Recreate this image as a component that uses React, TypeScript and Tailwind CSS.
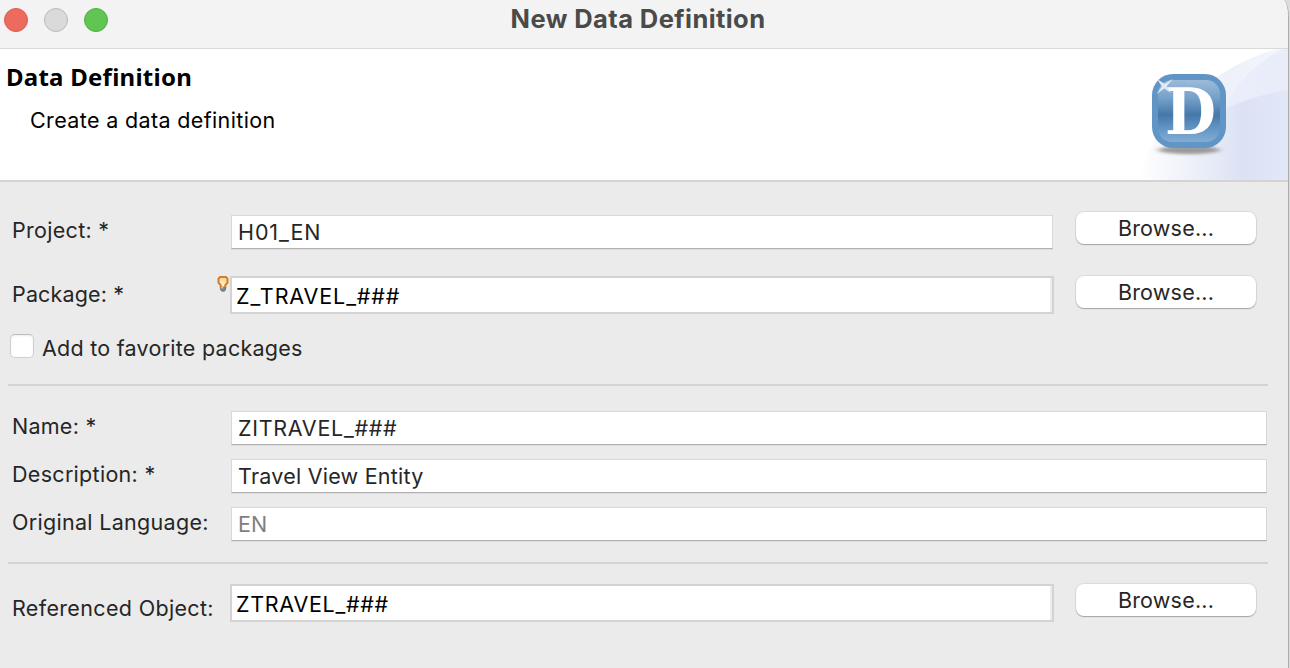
import type { ReactNode } from "react";

function Label({ children, className = "" }: { children: ReactNode; className?: string }) {
  return (
    <span className={`block w-[218px] shrink-0 whitespace-nowrap pl-3 leading-7 ${className}`}>{children}</span>
  );
}

function TextField({ value, className = "" }: { value: string; className?: string }) {
  return (
    <div className="h-[34px] border border-[#d8d8d8] border-b-[#b0b0b0] bg-white pl-[6px] leading-[32px] shadow-[0_1px_0_#dedede]">
      <span className={className}>{value}</span>
    </div>
  );
}

function AssistField({ value, className = "" }: { value: string; className?: string }) {
  return (
    <div className="h-[38px] w-[824px] border-2 border-[#d3d3d3] bg-white pl-[4px] leading-[36px] text-black shadow-[inset_-2px_0_0_#ececec]">
      <span className={className}>{value}</span>
    </div>
  );
}

function BrowseButton({ className = "" }: { className?: string }) {
  return (
    <button
      className={`block h-8 w-[180px] rounded-[8px] bg-white text-center leading-8 tracking-[0.2px] shadow-[0_0_1px_1px_rgba(0,0,0,0.07),0_1px_1px_rgba(0,0,0,0.25)] ${className}`}
    >
      Browse...
    </button>
  );
}

function Bulb() {
  return (
    <svg className="absolute top-0 -left-[13px]" width="12" height="17" viewBox="0 0 12 17">
      <defs>
        <linearGradient id="bulb" x1="0" y1="0" x2="0" y2="1">
          <stop offset="0" stopColor="#fbd08c" />
          <stop offset="1" stopColor="#fffbe8" />
        </linearGradient>
      </defs>
      <path d="M3 1.1h6l1.5 1.5v4L8.3 9.2v2.3H3.7V9.2L1.5 6.6v-4z" fill="url(#bulb)" stroke="#d07d2c" strokeWidth="2" />
      <path d="M3 11h6v2.8L7.4 15.8H4.8L3 13.8z" fill="#76808c" />
      <path d="M3.8 11h2.6v1.6H3.8z" fill="#b4bcc5" />
    </svg>
  );
}

function HeaderArt() {
  return (
    <svg className="block" width="158" height="131" viewBox="0 0 158 131">
      <defs>
        <linearGradient id="outer" x1="0" y1="0" x2="1" y2="0">
          <stop offset="0" stopColor="#ffffff" />
          <stop offset="0.6" stopColor="#eef1fa" />
          <stop offset="1" stopColor="#f4f6fc" />
        </linearGradient>
        <linearGradient id="inner" x1="0" y1="0" x2="1" y2="0">
          <stop offset="0" stopColor="#eaeefa" />
          <stop offset="1" stopColor="#e9edfa" />
        </linearGradient>
        <linearGradient id="low" gradientUnits="userSpaceOnUse" x1="8" y1="0" x2="158" y2="0">
          <stop offset="0" stopColor="#ffffff" />
          <stop offset="0.35" stopColor="#eef1f9" />
          <stop offset="0.7" stopColor="#dce2f4" />
          <stop offset="1" stopColor="#e2e8f8" />
        </linearGradient>
        <linearGradient id="face" x1="0" y1="0" x2="0" y2="1">
          <stop offset="0" stopColor="#9cbbd9" />
          <stop offset="0.3" stopColor="#74a0c9" />
          <stop offset="0.56" stopColor="#4578a9" />
          <stop offset="0.8" stopColor="#6598c6" />
          <stop offset="1" stopColor="#82add4" />
        </linearGradient>
        <filter id="soft" x="-20%" y="-80%" width="140%" height="260%">
          <feGaussianBlur stdDeviation="3 1.4" />
        </filter>
      </defs>
      <path d="M8 131C20 82 50 50 85 29 105 16 125 6 146 0H158V131z" fill="url(#outer)" />
      <path d="M84 131C84 95 88 70 100 49 112 28 130 11 153 0H158V131z" fill="url(#inner)" />
      <path d="M8 131C12 115 18 103 26 92 45 82 70 71 97 59 117 50 137 44 158 41V131z" fill="url(#low)" />
      <ellipse cx="59" cy="101" rx="31" ry="4" fill="#9a9a9a" filter="url(#soft)" />
      <rect x="22" y="25" width="74" height="74" rx="21" fill="#6195c6" />
      <rect x="28" y="31" width="62" height="62" rx="14" fill="url(#face)" />
      <text
        x="35"
        y="85"
        textLength="51"
        lengthAdjust="spacingAndGlyphs"
        fill="#fff"
        fontFamily="'DejaVu Serif',serif"
        fontWeight="700"
        fontSize="63"
      >
        D
      </text>
      <path d="M27 30l7.5 4.8L43 30l-6.2 7L41 44l-6.6-4.6L26.5 45l5.4-7.6z" fill="#dfeaf4" />
    </svg>
  );
}

export default function App() {
  return (
    <div className="flex h-[668px] w-[1290px] overflow-hidden bg-[#dcdcdc] font-['Inter','Liberation_Sans',sans-serif] text-[21.5px] text-[#262626]">
      <main className="flex w-[1289px] flex-col overflow-hidden border-r border-[#ababab] bg-[#ebebeb] [border-top-right-radius:6px_18px]">
        <header className="relative flex h-[49px] shrink-0 justify-center border-b border-[#d9d9d9] bg-[#f3f3f3]">
          <div className="absolute top-2 left-1 flex gap-4">
            <i className="size-6 rounded-full border border-[#dc5a4f] bg-[#ed6a5e]" />
            <i className="size-6 rounded-full border border-[#b9b9b9] bg-[#dadada]" />
            <i className="size-6 rounded-full border border-[#50ae43] bg-[#61c554]" />
          </div>
          <h1 className="mr-[12px] text-[25.5px] leading-[38px] font-bold tracking-[0.42px] whitespace-nowrap text-[#4a4a4a]">New Data Definition</h1>
        </header>

        <section className="flex h-[133px] shrink-0 justify-between border-b-2 border-[#d3d3d3] bg-white text-black">
          <div>
            <h2 className="mt-[12px] ml-[6px] font-['Noto_Sans',sans-serif] text-[24px] leading-8 font-bold tracking-[0.25px]">Data Definition</h2>
            <p className="mt-[13px] ml-[30px] leading-7 tracking-[0.36px]">Create a data definition</p>
          </div>
          <HeaderArt />
        </section>

        <section className="flex flex-col">
          <div className="flex h-[94px] pt-[33px]">
            <Label className="mt-[1px] mr-[13px] tracking-[0.3px]">Project: *</Label>
            <div className="w-[822px]">
              <TextField value="H01_EN" className="tracking-[0.9px]" />
            </div>
            <BrowseButton className="-mt-[3px] ml-[23px]" />
          </div>
          <div className="flex h-[58px]">
            <Label className="mt-[4px] mr-[12px] tracking-[0.15px]">Package: *</Label>
            <div className="relative">
              <Bulb />
              <AssistField value="Z_TRAVEL_###" className="tracking-[0.88px]" />
            </div>
            <BrowseButton className="ml-[22px]" />
          </div>
          <label className="flex h-[50px] items-start pl-[10px]">
            <i className="size-6 rounded-[5px] border border-[#cfcfcf] border-t-[#bdbdbd] bg-white shadow-[inset_0_1px_2px_rgba(0,0,0,0.08)]" />
            <span className="ml-2 leading-[28px] tracking-[0.25px]">Add to favorite packages</span>
          </label>
          <hr className="mr-5 ml-2 h-[2px] border-0 bg-[#d3d3d3]" />
          <div className="mt-[25px] flex flex-col gap-[14px]">
            <div className="flex h-[34px]">
              <Label className="mt-[1px] mr-[13px] tracking-[0.25px]">Name: *</Label>
              <div className="w-[1036px]"><TextField value="ZITRAVEL_###" className="tracking-[0.7px]" /></div>
            </div>
            <div className="flex h-[34px]">
              <Label className="mt-[1px] mr-[13px] tracking-[0.3px]">Description: *</Label>
              <div className="w-[1036px]"><TextField value="Travel View Entity" className="tracking-[0.24px]" /></div>
            </div>
            <div className="flex h-[34px]">
              <Label className="mt-[1px] mr-[13px] tracking-[0.3px]">Original Language:</Label>
              <div className="w-[1036px] text-[#808080]"><TextField value="EN" /></div>
            </div>
          </div>
          <hr className="mt-[21px] mr-5 ml-2 h-[2px] border-0 bg-[#d3d3d3]" />
          <div className="mt-5 flex">
            <Label className="mt-[10px] mr-[12px] tracking-[0.34px]">Referenced Object:</Label>
            <AssistField value="ZTRAVEL_###" className="tracking-[0.7px]" />
            <BrowseButton className="ml-[22px]" />
          </div>
        </section>
      </main>
    </div>
  );
}
